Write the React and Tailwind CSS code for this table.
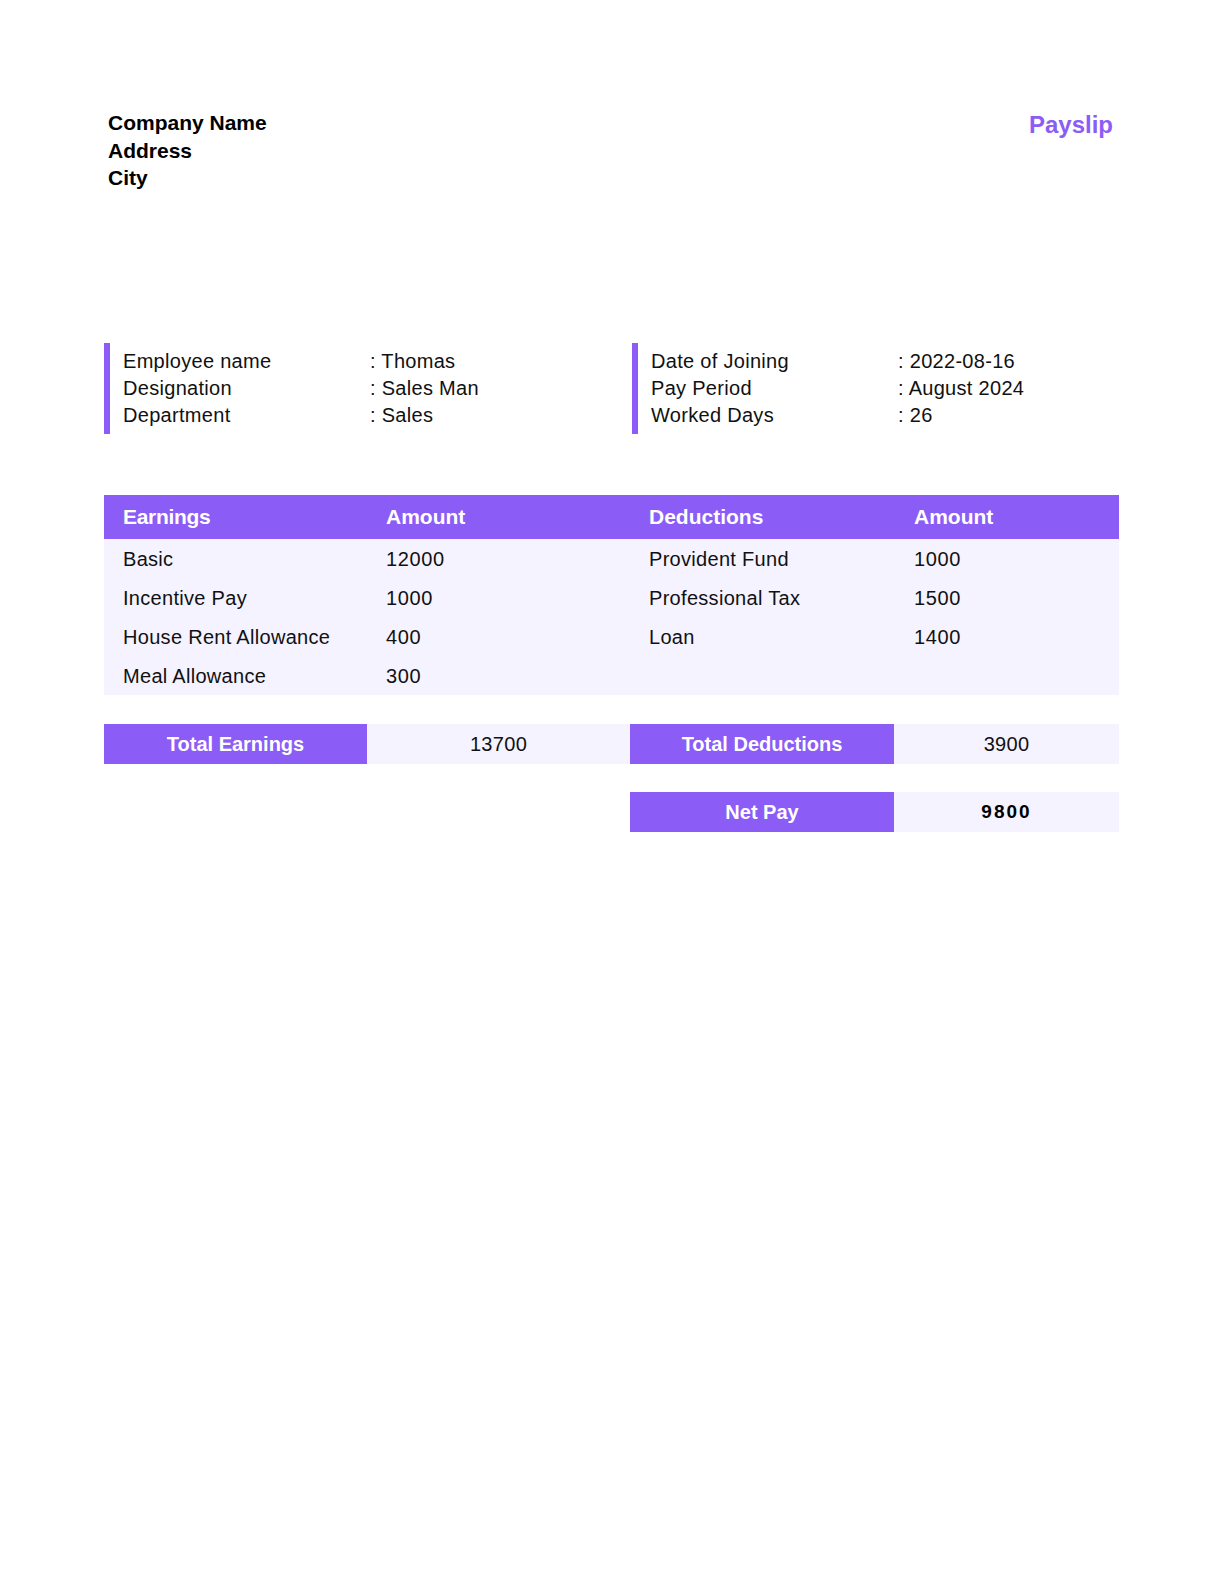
import React from "react";

const employee = [
  ["Employee name", "Thomas"],
  ["Designation", "Sales Man"],
  ["Department", "Sales"],
];

const period = [
  ["Date of Joining", "2022-08-16"],
  ["Pay Period", "August 2024"],
  ["Worked Days", "26"],
];

const earnings = [
  ["Basic", "12000"],
  ["Incentive Pay", "1000"],
  ["House Rent Allowance", "400"],
  ["Meal Allowance", "300"],
];

const deductions = [
  ["Provident Fund", "1000"],
  ["Professional Tax", "1500"],
  ["Loan", "1400"],
];

const InfoBlock = ({ rows, className = "" }) => (
  <div className={`border-l-[6px] border-[#8b5cf6] pl-[13px] py-[5px] ${className}`}>
    {rows.map(([label, value]) => (
      <div key={label} className="flex leading-[27px]">
        <span className="w-[247px] shrink-0">{label}</span>
        <span>: {value}</span>
      </div>
    ))}
  </div>
);

const App = () => {
  const rows = [0, 1, 2, 3];

  return (
    <div className="w-[1224px] min-h-[1584px] bg-white text-black font-['Liberation_Sans',Arial,sans-serif] pl-[104px] pr-[105px] pt-[109px]">
      {/* Header */}
      <div className="flex justify-between items-start">
        <div className="pl-[4px] text-[21px] font-bold leading-[27.5px]">
          <div>Company Name</div>
          <div>Address</div>
          <div>City</div>
        </div>
        <div className="pr-[6px] text-[24px] font-bold leading-[32px] text-[#8b5cf6]">
          Payslip
        </div>
      </div>

      {/* Employee info */}
      <div className="flex mt-[151px] text-[20px] tracking-[0.3px] text-[#111]">
        <InfoBlock rows={employee} className="w-[526px]" />
        <InfoBlock rows={period} className="ml-[2px] flex-1" />
      </div>

      {/* Earnings / deductions table */}
      <div className="mt-[61px] grid grid-cols-[263px_263px_264px_225px]">
        <div className="bg-[#8b5cf6] text-white font-bold text-[21px] tracking-[-0.3px] h-[44px] flex items-center px-[19px]">Earnings</div>
        <div className="bg-[#8b5cf6] text-white font-bold text-[21px] h-[44px] flex items-center px-[19px]">Amount</div>
        <div className="bg-[#8b5cf6] text-white font-bold text-[21px] h-[44px] flex items-center px-[19px]">Deductions</div>
        <div className="bg-[#8b5cf6] text-white font-bold text-[21px] h-[44px] flex items-center px-[20px]">Amount</div>
        {rows.map((i) => (
          <React.Fragment key={i}>
            <div className="bg-[#f5f3ff] h-[39px] flex items-center pt-[2px] px-[19px] text-[20px] tracking-[0.3px] text-[#111]">
              {earnings[i] ? earnings[i][0] : ""}
            </div>
            <div className="bg-[#f5f3ff] h-[39px] flex items-center pt-[2px] px-[19px] text-[20px] tracking-[0.6px] text-[#111]">
              {earnings[i] ? earnings[i][1] : ""}
            </div>
            <div className="bg-[#f5f3ff] h-[39px] flex items-center pt-[2px] px-[19px] text-[20px] tracking-[0.3px] text-[#111]">
              {deductions[i] ? deductions[i][0] : ""}
            </div>
            <div className="bg-[#f5f3ff] h-[39px] flex items-center pt-[2px] px-[20px] text-[20px] tracking-[0.6px] text-[#111]">
              {deductions[i] ? deductions[i][1] : ""}
            </div>
          </React.Fragment>
        ))}
      </div>

      {/* Totals */}
      <div className="mt-[29px] grid grid-cols-[263px_263px_264px_225px] h-[40px]">
        <div className="bg-[#8b5cf6] text-white font-bold text-[20px] flex items-center justify-center">Total Earnings</div>
        <div className="bg-[#f5f3ff] text-[20px] tracking-[0.3px] text-[#111] flex items-center justify-center">13700</div>
        <div className="bg-[#8b5cf6] text-white font-bold text-[20px] flex items-center justify-center">Total Deductions</div>
        <div className="bg-[#f5f3ff] text-[20px] tracking-[0.3px] text-[#111] flex items-center justify-center">3900</div>
      </div>

      {/* Net pay */}
      <div className="mt-[28px] grid grid-cols-[263px_263px_264px_225px] h-[40px]">
        <div className="col-start-3 bg-[#8b5cf6] text-white font-bold text-[20px] flex items-center justify-center">Net Pay</div>
        <div className="bg-[#f5f3ff] text-[19px] font-bold tracking-[2px] pt-[1px] flex items-center justify-center">9800</div>
      </div>
    </div>
  );
};

export default App;
